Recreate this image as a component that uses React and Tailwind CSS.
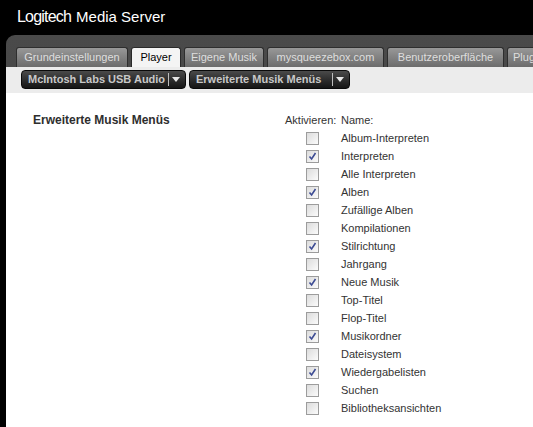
import React from 'react';

const tabs = [
  { label: 'Grundeinstellungen', w: 'w-[112px]' },
  { label: 'Player', w: 'w-[50px]', active: true },
  { label: 'Eigene Musik', w: 'w-[80px]' },
  { label: 'mysqueezebox.com', w: 'w-[117px]' },
  { label: 'Benutzeroberfläche', w: 'w-[117px]' },
  { label: 'Plugins', w: 'w-[80px]', left: true },
];

const items = [
  ['Album-Interpreten', false],
  ['Interpreten', true],
  ['Alle Interpreten', false],
  ['Alben', true],
  ['Zufällige Alben', false],
  ['Kompilationen', false],
  ['Stilrichtung', true],
  ['Jahrgang', false],
  ['Neue Musik', true],
  ['Top-Titel', false],
  ['Flop-Titel', false],
  ['Musikordner', true],
  ['Dateisystem', false],
  ['Wiedergabelisten', true],
  ['Suchen', false],
  ['Bibliotheksansichten', false],
];

function Dropdown({ label, w }) {
  return (
    <div className={`${w} h-[19px] flex items-center rounded-[4px] bg-gradient-to-b from-[#4a4a4a] to-[#151515] border border-[#0a0a0a] pl-[6px] pr-[4px]`}>
      <span className="flex-1 text-[11px] font-bold text-[#c8c8c8] leading-none whitespace-nowrap">{label}</span>
      <span className="w-px h-[13px] bg-[#bdbdbd] mr-[3px]" />
      <svg width="8" height="5" viewBox="0 0 8 5" className="mr-[1px]">
        <path d="M0 0 L8 0 L4 5 Z" fill="#e6e6e6" />
      </svg>
    </div>
  );
}

function Box({ checked }) {
  return (
    <div className="w-[13px] h-[13px] border border-[#9c9c9c] bg-gradient-to-br from-[#dcdcdc] to-[#fbfbfb] flex items-center justify-center">
      {checked && (
        <svg width="9" height="9" viewBox="0 0 9 9">
          <path d="M1.5 4.5 L3.6 7 L7.5 1" stroke="#3d4c94" strokeWidth="1.6" fill="none" />
        </svg>
      )}
    </div>
  );
}

export default function App() {
  return (
    <div className="w-[533px] h-[427px] bg-black overflow-hidden flex flex-col font-['Liberation_Sans',Arial,sans-serif]">
      {/* Header */}
      <div className="h-[35px] shrink-0 pl-[17px] pt-[7px] text-white text-[15px] leading-[20px] whitespace-nowrap">
        <span className="text-[16px] tracking-[-0.8px]">Logitech</span>
        <span className="ml-[5px]">Media Server</span>
      </div>

      {/* Panel */}
      <div className="flex-1 ml-[6px] rounded-tl-[9px] bg-gradient-to-b from-[#4a4a4a] to-[#3c3c3c] flex flex-col overflow-hidden">
        <div className="h-[32px] shrink-0 pt-[12px] pl-[10px] flex gap-[3px] items-end">
          {tabs.map(t => (
            <div
              key={t.label}
              className={`${t.w} shrink-0 h-[20px] rounded-t-[3px] flex items-center text-[11px] whitespace-nowrap overflow-hidden ${t.left ? 'justify-start pl-[5px]' : 'justify-center'} ${t.active
                ? 'bg-[#f4f4f4] text-black border border-b-0 border-[#2a2a2a]'
                : 'bg-gradient-to-b from-[#989898] to-[#6c6c6c] text-[#dedede] border border-b-0 border-[#2e2e2e]'
                }`}
            >
              {t.label}
            </div>
          ))}
        </div>

        <div className="h-[26px] shrink-0 bg-[#ececec] pl-[15px] pt-[3px] flex gap-[3px]">
          <Dropdown label="McIntosh Labs USB Audio" w="w-[165px]" />
          <Dropdown label="Erweiterte Musik Menüs" w="w-[161px]" />
        </div>

        {/* Content */}
        <div className="flex-1 bg-white pl-[27px] pt-[20px] flex items-start text-[#333]">
          <div className="w-[252px] shrink-0 text-[12px] font-bold leading-[14px] text-[#2e2e2e]">
            Erweiterte Musik Menüs
          </div>
          <div className="grid grid-cols-[56px_auto] content-start text-[11px]">
            <div className="h-[16px] leading-[14px]">Aktivieren:</div>
            <div className="h-[16px] leading-[14px]">Name:</div>
            {items.map(([name, checked]) => (
              <React.Fragment key={name}>
                <div className="h-[18px] flex items-center pl-[21px]">
                  <Box checked={checked} />
                </div>
                <div className="h-[18px] leading-[18px]">{name}</div>
              </React.Fragment>
            ))}
          </div>
        </div>
      </div>
    </div>
  );
}
